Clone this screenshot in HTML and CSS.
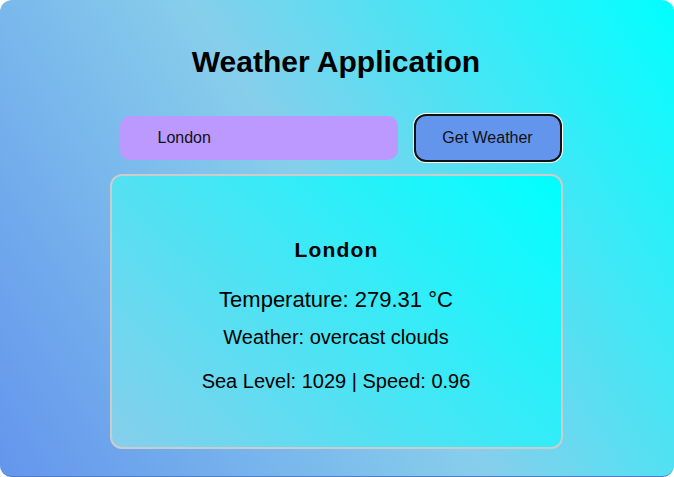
FILE: index.html
```html
<!DOCTYPE html>
<html lang="en">
<head>
<meta charset="UTF-8">
<title>Weather Application</title>
<link rel="stylesheet" href="styles.css">
</head>
<body>
<div class="app">
  <h1 class="title">Weather Application</h1>
  <div class="search">
    <input class="city-input" type="text" value="London">
    <button class="get-btn">Get Weather</button>
  </div>
  <div class="card">
    <h2 class="city">London</h2>
    <p class="temp">Temperature: 279.31 °C</p>
    <p class="desc">Weather: overcast clouds</p>
    <p class="extra">Sea Level: 1029 | Speed: 0.96</p>
  </div>
</div>
</body>
</html>
```

FILE: styles.css
```css
html, body {
  margin: 0;
  padding: 0;
}
body {
  font-family: "Liberation Sans", Arial, sans-serif;
  color: #000;
  background: #ffffff;
}
.app {
  box-sizing: border-box;
  width: 674px;
  height: 477px;
  border-radius: 12px;
  border-bottom: 1px solid #4f7fc4;
  background: linear-gradient(58deg, #6495ed 0%, #87ceeb 50%, #00ffff 100%);
  display: flex;
  flex-direction: column;
  align-items: center;
  padding-top: 45px;
  padding-right: 2px;
  overflow: hidden;
}
.title {
  margin: 0;
  font-size: 30px;
  line-height: 34px;
  font-weight: bold;
}
.search {
  box-sizing: border-box;
  width: 453px;
  margin-top: 35px;
  padding-left: 10px;
  display: flex;
  align-items: center;
  gap: 16px;
}
.city-input {
  box-sizing: border-box;
  width: 278px;
  height: 44px;
  border: none;
  border-radius: 10px;
  background: #bb99ff;
  padding: 0 0 0 38px;
  font-family: "Liberation Sans", Arial, sans-serif;
  font-size: 16px;
  color: #111;
  outline: none;
}
.get-btn {
  box-sizing: border-box;
  width: 148px;
  height: 48px;
  border: 2px solid #111;
  border-radius: 12px;
  box-shadow: 0 0 0 1px #ffffff;
  background: #6495ed;
  font-family: "Liberation Sans", Arial, sans-serif;
  font-size: 16px;
  color: #111;
  padding: 0;
}
.card {
  box-sizing: border-box;
  width: 453px;
  height: 275px;
  margin-top: 12px;
  border: 2px solid #cccccc;
  border-radius: 12px;
  background: linear-gradient(45deg, #87ceeb 0%, #00ffff 100%);
  display: flex;
  flex-direction: column;
  align-items: center;
  padding-top: 62px;
}
.city {
  margin: 0;
  font-size: 21px;
  line-height: 24px;
  font-weight: bold;
  letter-spacing: 1.2px;
  padding-left: 1px;
}
.temp {
  margin: 25px 0 0;
  font-size: 22px;
  line-height: 26px;
}
.desc {
  margin: 13px 0 0;
  font-size: 20px;
  line-height: 23px;
}
.extra {
  margin: 21px 0 0;
  font-size: 20px;
  line-height: 23px;
}
```
